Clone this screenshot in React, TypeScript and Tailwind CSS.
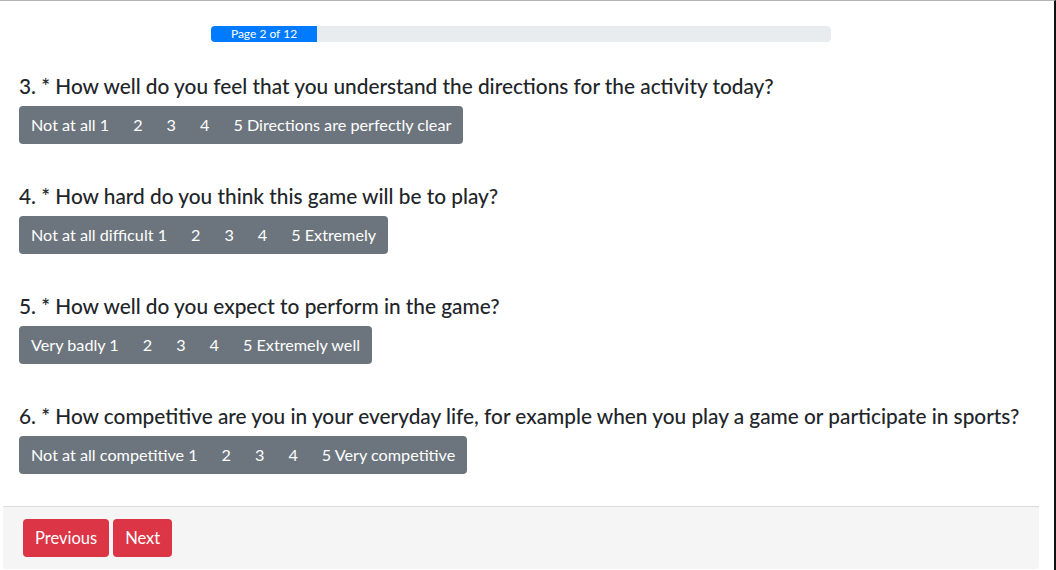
import React from 'react';

const questions = [
  { n: 3, text: 'How well do you feel that you understand the directions for the activity today?', low: 'Not at all 1', high: '5 Directions are perfectly clear' },
  { n: 4, text: 'How hard do you think this game will be to play?', low: 'Not at all difficult 1', high: '5 Extremely' },
  { n: 5, text: 'How well do you expect to perform in the game?', low: 'Very badly 1', high: '5 Extremely well' },
  { n: 6, text: 'How competitive are you in your everyday life, for example when you play a game or participate in sports?', low: 'Not at all competitive 1', high: '5 Very competitive' },
];

const Scale = ({ low, high }: { low: string; high: string }) => {
  const labels = [low, '2', '3', '4', high];
  return (
    <div className="inline-flex rounded-[4px] overflow-hidden bg-[#6c757d]">
      {labels.map((l) => (
        <button key={l} className="h-[38px] px-3 text-[16.2px] text-white leading-6 whitespace-nowrap">
          {l}
        </button>
      ))}
    </div>
  );
};

const App = () => {
  return (
    <div className="w-[1056px] h-[570px] overflow-hidden bg-white border-t border-t-[#b4b4b4] border-r-2 border-r-[#111] pt-[25px] pl-[3px] pr-[15px] text-[#212529] font-['Segoe_UI','Lato',sans-serif]">
      <div className="w-[620px] h-4 mx-auto bg-[#e9ecef] rounded-[4px] overflow-hidden flex">
        <div className="w-[106px] h-4 bg-[#007bff] text-white text-xs leading-4 text-center">Page 2 of 12</div>
      </div>
      <div className="px-4 pt-8">
        {questions.map((q) => (
          <div key={q.n} className="mb-8 [&:not(:last-child)]:mb-10">
            <h5 className="text-[20.8px] font-medium leading-6 mb-2 whitespace-nowrap">
              {q.n}. * {q.text}
            </h5>
            <Scale low={q.low} high={q.high} />
          </div>
        ))}
      </div>
      <div className="bg-[#f5f5f5] border-t border-t-[#dcdcdc] px-5 py-3 flex gap-1 rounded-b-[4px]">
        <button className="h-[38px] px-3 bg-[#dc3545] text-white text-[16.5px] rounded-[4px]">Previous</button>
        <button className="h-[38px] px-3 bg-[#dc3545] text-white text-[16.5px] rounded-[4px]">Next</button>
      </div>
    </div>
  );
};

export default App;
